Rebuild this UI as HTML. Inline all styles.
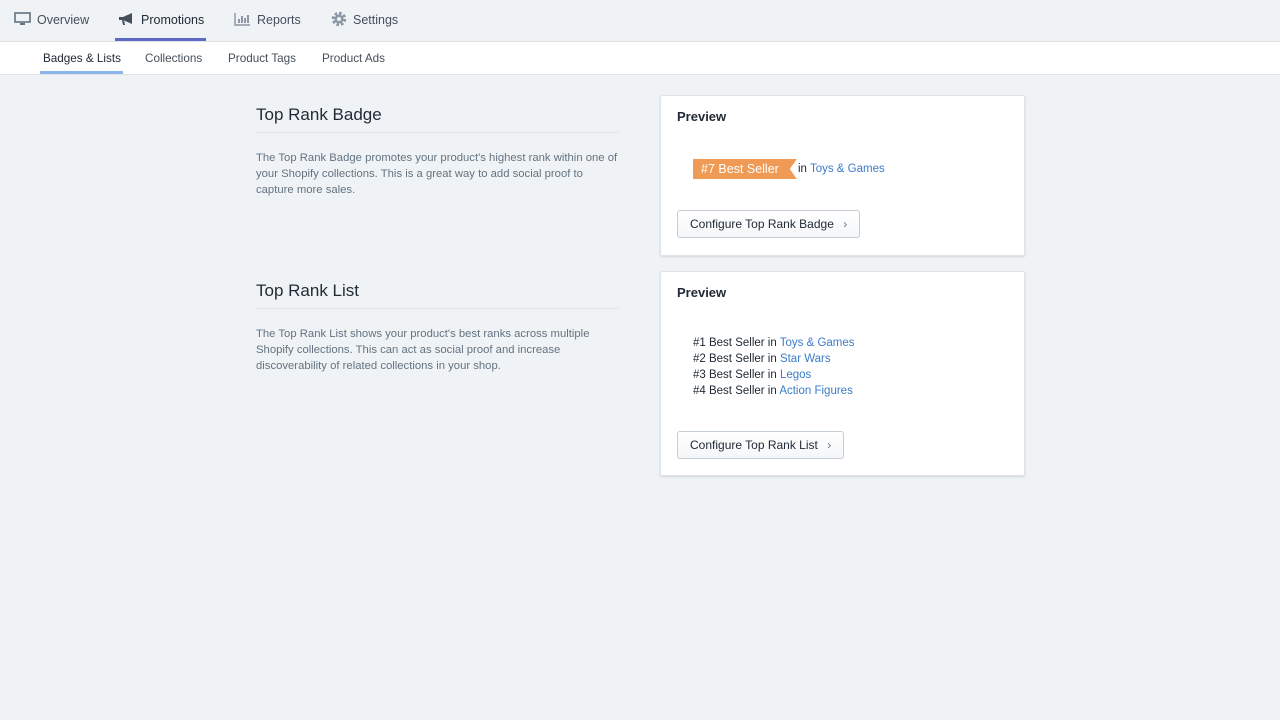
<!DOCTYPE html>
<html><head><style>
body{margin:0;width:1280px;height:720px;background:#f0f3f6;font-family:"Liberation Sans",sans-serif;color:#212b36;position:relative;overflow:hidden}
.top{height:41px;border-bottom:1px solid #dfe3e8;position:relative}
.tab{position:absolute;top:0;height:41px;line-height:40px;font-size:12.5px;color:#454f5b}
.sub{position:absolute;top:42px;left:0;right:0;height:32px;background:#fff;border-bottom:1px solid #dfe3e8}
.st{position:absolute;top:1px;line-height:32px;font-size:11.7px;color:#454f5b}
h2{position:absolute;margin:0;font-weight:normal;font-size:17px;color:#212b36}
.hr{position:absolute;left:256px;width:363px;border-top:1px solid #dfe3e8}
.p{position:absolute;left:256px;width:362px;font-size:11.3px;line-height:16px;color:#637381}
.card{position:absolute;left:660px;width:363px;background:#fff;border:1px solid #dfe3e8;box-shadow:0 1px 2px rgba(0,0,0,.12);border-radius:2px}
.card b{position:absolute;left:16px;top:13px;font-size:13px;color:#212b36}
.btn{position:absolute;left:16px;height:28px;border:1px solid #c4cdd5;border-radius:3px;background:linear-gradient(#fff,#f4f6f8);font-size:12px;line-height:26px;padding:0 12px;color:#212b36;box-sizing:border-box;white-space:nowrap}
a{color:#3a7cc8;text-decoration:none}
.l{font-size:11.5px;line-height:16px;color:#212b36}
</style></head><body>
<div class="top">
<div class="tab" style="left:14px"><svg width="17" height="14" viewBox="0 0 17 14" style="vertical-align:-2px;margin-right:6px"><rect x="1" y="1" width="15" height="9" fill="none" stroke="#637381" stroke-width="1.6"/><rect x="6" y="11" width="5" height="2" fill="#637381"/></svg>Overview</div>
<div class="tab" style="left:118px;color:#212b36"><svg width="17" height="14" viewBox="0 0 17 14" style="vertical-align:-2px;margin-right:6px"><path d="M1 5h4l9-4v11l-9-4H1z M4 8l1 5h2l-1-5z" fill="#454f5b"/></svg>Promotions</div>
<div style="position:absolute;left:115px;top:38px;width:91px;height:3px;background:#5c6ac4"></div>
<div class="tab" style="left:234px"><svg width="17" height="14" viewBox="0 0 17 14" style="vertical-align:-2px;margin-right:6px"><path d="M1 1v12h15" fill="none" stroke="#8c98a6" stroke-width="1.5"/><rect x="4" y="7" width="2" height="4" fill="#8c98a6"/><rect x="7" y="4" width="2" height="7" fill="#8c98a6"/><rect x="10" y="6" width="2" height="5" fill="#8c98a6"/><rect x="13" y="3" width="2" height="8" fill="#8c98a6"/></svg>Reports</div>
<div class="tab" style="left:331px"><svg width="16" height="16" viewBox="0 0 16 16" style="vertical-align:-3px;margin-right:6px"><circle cx="8" cy="8" r="5.5" fill="none" stroke="#8c98a6" stroke-width="3.5" stroke-dasharray="2.5 1.8"/><circle cx="8" cy="8" r="4.5" fill="#8c98a6"/><circle cx="8" cy="8" r="2" fill="#f0f3f6"/></svg>Settings</div>
</div>
<div class="sub">
<div class="st" style="left:43px;color:#212b36">Badges &amp; Lists</div>
<div style="position:absolute;left:40px;top:29px;width:83px;height:3px;background:#8ab6ec"></div>
<div class="st" style="left:145px">Collections</div>
<div class="st" style="left:228px">Product Tags</div>
<div class="st" style="left:322px">Product Ads</div>
</div>
<h2 style="left:256px;top:105px">Top Rank Badge</h2>
<div class="hr" style="top:132px"></div>
<div class="p" style="top:150px">The Top Rank Badge promotes your product's highest rank within one of your Shopify collections. This is a great way to add social proof to capture more sales.</div>
<h2 style="left:256px;top:281px">Top Rank List</h2>
<div class="hr" style="top:308px"></div>
<div class="p" style="top:326px">The Top Rank List shows your product's best ranks across multiple Shopify collections. This can act as social proof and increase discoverability of related collections in your shop.</div>
<div class="card" style="top:95px;height:159px"><b>Preview</b>
<div style="position:absolute;left:32px;top:63px;height:20px;line-height:20px;font-size:12.5px;color:#fff;background:#ef9b55;padding:0 18px 0 8px;clip-path:polygon(0 0,100% 0,calc(100% - 7px) 50%,100% 100%,0 100%)">#7 Best Seller</div>
<div style="position:absolute;left:137px;top:63px;line-height:20px;font-size:11.5px">in <a>Toys &amp; Games</a></div>
<div class="btn" style="top:114px">Configure Top Rank Badge <span style="color:#637381;margin-left:6px">›</span></div>
</div>
<div class="card" style="top:271px;height:203px"><b>Preview</b>
<div style="position:absolute;left:32px;top:63px" class="l">#1 Best Seller in <a>Toys &amp; Games</a><br>#2 Best Seller in <a>Star Wars</a><br>#3 Best Seller in <a>Legos</a><br>#4 Best Seller in <a>Action Figures</a></div>
<div class="btn" style="top:159px">Configure Top Rank List <span style="color:#637381;margin-left:6px">›</span></div>
</div>
</body></html>
